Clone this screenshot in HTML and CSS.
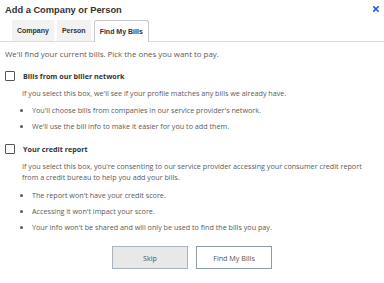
FILE: index.html
```html
<!DOCTYPE html>
<html>
<head>
<meta charset="utf-8">
<link rel="stylesheet" href="styles.css">
</head>
<body>
<div class="dialog">
  <div class="header">
    <h1 class="title">Add a Company or Person</h1>
    <button class="close" aria-label="Close">
      <svg width="6" height="6" viewBox="0 0 6 6"><path d="M0.8 0.8 L5.2 5.2 M5.2 0.8 L0.8 5.2" stroke="#2b55f0" stroke-width="1.6" stroke-linecap="square"/></svg>
    </button>
  </div>
  <div class="tabs">
    <div class="tab">Company</div>
    <div class="tab">Person</div>
    <div class="tab active">Find My Bills</div>
  </div>
  <div class="content">
    <p class="intro">We'll find your current bills. Pick the ones you want to pay.</p>
    <div class="option">
      <div class="option-head"><span class="checkbox"></span><span class="label">Bills from our biller network</span></div>
      <div class="option-body">
        <p>If you select this box, we'll see if your profile matches any bills we already have.</p>
        <ul>
          <li>You'll choose bills from companies in our service provider's network.</li>
          <li>We'll use the bill info to make it easier for you to add them.</li>
        </ul>
      </div>
    </div>
    <div class="option">
      <div class="option-head"><span class="checkbox"></span><span class="label">Your credit report</span></div>
      <div class="option-body">
        <p>If you select this box, you're consenting to our service provider accessing your consumer credit report from a credit bureau to help you add your bills.</p>
        <ul class="spaced">
          <li>The report won't have your credit score.</li>
          <li>Accessing it won't impact your score.</li>
          <li>Your info won't be shared and will only be used to find the bills you pay.</li>
        </ul>
      </div>
    </div>
    <div class="actions">
      <button class="btn btn-secondary">Skip</button>
      <button class="btn btn-primary">Find My Bills</button>
    </div>
  </div>
</div>
</body>
</html>
```
FILE: styles.css
```css
html, body {
  margin: 0;
  padding: 0;
  background: #ffffff;
}
body {
  width: 384px;
  height: 283px;
  overflow: hidden;
  font-family: "Open Sans", "Liberation Sans", sans-serif;
  color: #5a5a5a;
}
.dialog {
  display: flex;
  flex-direction: column;
}
.header {
  display: flex;
  justify-content: space-between;
  align-items: flex-start;
  height: 14px;
  padding: 5px 5px 0 5px;
  box-sizing: content-box;
}
.title {
  margin: 0;
  font-family: "Liberation Sans", Arial, sans-serif;
  font-size: 9.3px;
  font-weight: bold;
  color: #333333;
  line-height: 11px;
}
.close {
  border: 0;
  background: none;
  padding: 0;
  margin: 1px 0 0 0;
  width: 6px;
  height: 6px;
  display: flex;
}
.tabs {
  display: flex;
  gap: 3px;
  padding: 1px 0 0 12px;
  border-bottom: 1px solid #dddddd;
  height: 21px;
  box-sizing: content-box;
}
.tab {
  font-family: "Liberation Sans", Arial, sans-serif;
  font-size: 7px;
  font-weight: bold;
  color: #333333;
  background: #f2f2f2;
  padding: 0 5px;
  display: flex;
  align-items: center;
  height: 21px;
}
.tab.active {
  background: #ffffff;
  border: 1px solid #c8c8c8;
  border-bottom: none;
  border-radius: 3px 3px 0 0;
  height: 21px;
  margin-bottom: -1px;
  padding: 0 5px;
}
.content {
  padding: 0 5px;
}
.intro {
  margin: 7px 0 0 0;
  font-size: 7.9px;
  line-height: 10px;
}
.option {
  margin-top: 12px;
}
.option-head {
  display: flex;
  align-items: center;
  gap: 8px;
  height: 10px;
}
.checkbox {
  width: 8px;
  height: 8px;
  border: 1px solid #555555;
  border-radius: 1px;
  flex: none;
}
.label {
  font-size: 7.2px;
  font-weight: bold;
  color: #333333;
}
.option-body {
  padding-left: 17px;
}
.option-body p {
  margin: 6.5px 0 0 0;
  font-size: 7.2px;
  line-height: 11px;
}
.option-body ul {
  margin: 6.5px 0 0 0;
  padding-left: 10px;
  font-size: 7.2px;
  line-height: 11px;
}
.option-body ul.spaced {
  margin-top: 7.5px;
}
.option-body li {
  margin-bottom: 5px;
}
.actions {
  display: flex;
  justify-content: center;
  gap: 8px;
  margin-top: 13px;
}
.btn {
  width: 76px;
  height: 23px;
  font-family: "Open Sans", sans-serif;
  font-size: 7.2px;
  color: #555555;
  border-radius: 0;
}
.btn-secondary {
  background: #e8e8e8;
  border: 1px solid #a9b4bf;
}
.btn-primary {
  background: #ffffff;
  border: 1px solid #8d9cab;
}
```
